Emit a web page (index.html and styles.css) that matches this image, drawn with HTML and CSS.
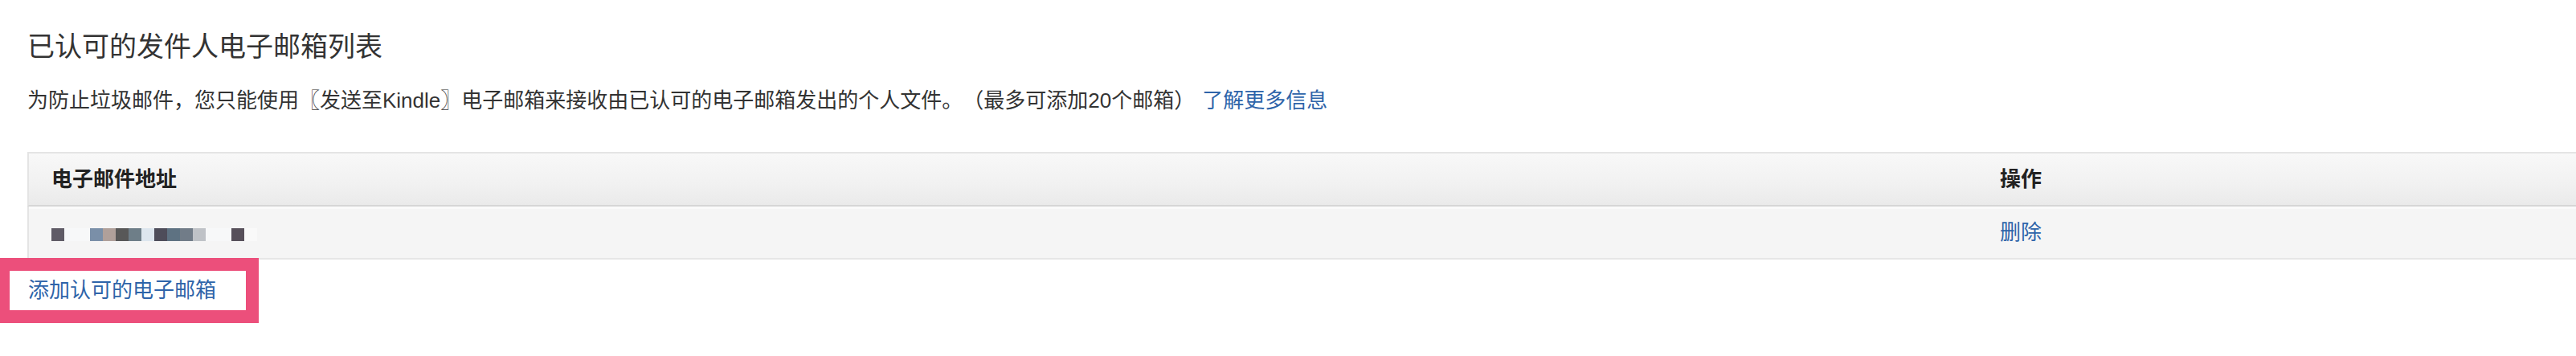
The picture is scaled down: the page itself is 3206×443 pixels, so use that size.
FILE: index.html
```html
<!DOCTYPE html>
<html lang="zh-CN">
<head>
<meta charset="utf-8">
<title>已认可的发件人电子邮箱列表</title>
<link rel="stylesheet" href="styles.css">
</head>
<body>
<div class="page">
  <h1 class="title">已认可的发件人电子邮箱列表</h1>
  <p class="intro">为防止垃圾邮件，您只能使用〖发送至Kindle〗电子邮箱来接收由已认可的电子邮箱发出的个人文件。（最多可添加20个邮箱）<a class="link more" href="#">了解更多信息</a></p>
  <table class="list">
    <colgroup><col class="col-email"><col class="col-action"></colgroup>
    <thead>
      <tr><th>电子邮件地址</th><th>操作</th></tr>
    </thead>
    <tbody>
      <tr>
        <td>
          <span class="blur">
            <i class="px c1"></i><i class="px gap"></i><i class="px gap"></i>
            <i class="px c2"></i><i class="px c3"></i><i class="px c4"></i><i class="px c5"></i><i class="px c6"></i>
            <i class="px c7"></i><i class="px c8"></i><i class="px c9"></i><i class="px c10"></i>
            <i class="px gap"></i><i class="px gap"></i><i class="px c11"></i><i class="px c12"></i>
          </span>
        </td>
        <td><a class="link" href="#">删除</a></td>
      </tr>
    </tbody>
  </table>
  <div class="add-row"><a class="link add" href="#">添加认可的电子邮箱</a></div>
</div>
</body>
</html>
```
FILE: styles.css
```css
html, body {
  margin: 0;
  padding: 0;
  background: #ffffff;
}
body {
  font-family: "Liberation Sans", "Noto Sans CJK SC", sans-serif;
  color: #333333;
  overflow: hidden;
  text-spacing-trim: space-all;
}
.page {
  padding: 38px 0 0 34px;
}
.title {
  margin: 0;
  font-size: 34px;
  line-height: 40px;
  font-weight: normal;
  color: #333333;
}
.intro {
  margin: 29px 0 0;
  font-size: 26px;
  line-height: 36px;
  color: #333333;
}
.link {
  color: #2e64a9;
  text-decoration: none;
}
.more {
  margin-left: 9px;
}
.list {
  margin-top: 46px;
  width: 100%;
  table-layout: fixed;
  border-collapse: separate;
  border-spacing: 0;
  border-top: 2px solid #e4e4e4;
  font-size: 26px;
}
.col-email {
  width: 2427px;
}
.list th,
.list td {
  padding: 0 28px;
  text-align: left;
  vertical-align: middle;
  line-height: 32px;
}
.list th:first-child,
.list td:first-child {
  border-left: 2px solid #e4e4e4;
}
.list th {
  height: 64px;
  font-weight: bold;
  color: #222222;
  background: linear-gradient(#f8f8f8, #f1f1f1 60%, #eaeaea);
  border-bottom: 2px solid #d6d6d6;
}
.list td {
  height: 64px;
  background: #f5f5f5;
  border-bottom: 2px solid #e6e6e6;
  box-shadow: inset 0 3px 0 #fafafa;
}
.blur {
  display: inline-flex;
  vertical-align: middle;
  margin-top: 2px;
}
.px {
  display: block;
  width: 16px;
  height: 16px;
}
.gap { background: #f7f8f9; }
.c1 { background: #5f5b66; }
.c2 { background: #7a8fa8; }
.c3 { background: #b0a09a; }
.c4 { background: #585858; }
.c5 { background: #6e7e88; }
.c6 { background: #dde6ee; }
.c7 { background: #4e4d5a; }
.c8 { background: #5e7282; }
.c9 { background: #717c88; }
.c10 { background: #bfc2c7; }
.c11 { background: #57505a; }
.c12 { background: #f9f9f9; }
.add-row {
  margin-top: -2px;
}
.add {
  position: relative;
  z-index: 1;
  display: inline-block;
  margin-left: -34px;
  background: #ffffff;
  border: 16px solid #ec4f7b;
  border-left-width: 12px;
  padding: 8px 37px 9px 23px;
  font-size: 26px;
  line-height: 32px;
}
```
